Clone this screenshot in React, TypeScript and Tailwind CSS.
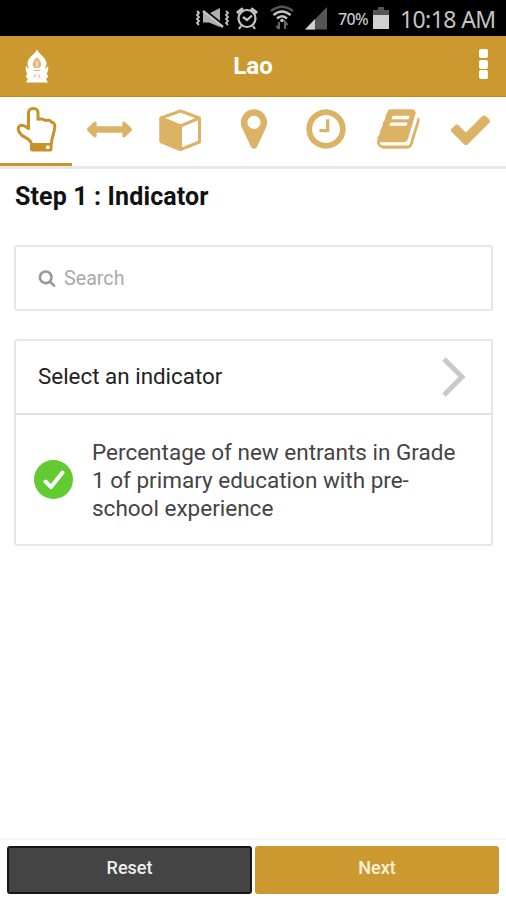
import { useState } from "react";

type IconProps = { className?: string };

function PointerIcon({ className }: IconProps) {
  return (
    <svg viewBox="0 0 46 46" className={className} fill="none">
      <path
        d="M18.500 38.500 C18.500 33 12 32 8.500 29 C4.500 25 4.500 21.500 6.500 20 C9 18.200 12.500 20 15.500 22.500 V6.500 C15.500 1.200 25 1.200 25 6.500 V13.200 C29 12.500 31.500 13.500 32.500 14.500 C35.500 13.800 38 14.800 38.700 16.300 C41.500 16.500 42 19 41.700 22 C41 28 38.500 32 38.300 38.500"
        stroke="currentColor"
        strokeWidth="3"
        strokeLinejoin="round"
      />
      <path d="M17 37 H39.500 V43 Q39.500 45.500 37 45.500 H19.500 Q17 45.500 17 43 Z" fill="currentColor" />
      <rect x="33" y="39.500" width="3.600" height="3.600" rx="1" fill="#fff" />
    </svg>
  );
}

function CubeIcon({ className }: IconProps) {
  return (
    <svg viewBox="0 0 46 46" className={className} fill="none" stroke="currentColor" strokeWidth="3" strokeLinejoin="round">
      <path d="M21.500 5 L40.500 12 V36 L21.500 43.500 L2 35.500 V12 Z" />
      <path d="M2 12 L21.500 20 V43.500 L2 35.500 Z" fill="currentColor" />
      <path d="M21.500 20 L40.500 12" />
    </svg>
  );
}

const glyphs = {
  arrows:
    "M1792 896q0 26-19 45l-256 256q-19 19-45 19t-45-19-19-45v-128h-1024v128q0 26-19 45t-45 19-45-19l-256-256q-19-19-19-45t19-45l256-256q19-19 45-19t45 19 19 45v128h1024v-128q0-26 19-45t45-19 45 19l256 256q19 19 19 45z",
  marker:
    "M1152 640q0-106-75-181t-181-75-181 75-75 181 75 181 181 75 181-75 75-181zm256 0q0 109-33 179l-364 774q-16 33-47.500 52t-67.500 19-67.500-19-46.500-52l-365-774q-33-70-33-179 0-212 150-362t362-150 362 150 150 362z",
  clock:
    "M1024 544v448q0 14-9 23t-23 9h-320q-14 0-23-9t-9-23v-64q0-14 9-23t23-9h224v-352q0-14 9-23t23-9h64q14 0 23 9t9 23zm416 352q0-148-73-273t-198-198-273-73-273 73-198 198-73 273 73 273 198 198 273 73 273-73 198-198 73-273zm224 0q0 209-103 385.500t-279.500 279.500-385.500 103-385.500-103-279.500-279.500-103-385.500 103-385.500 279.500-279.500 385.500-103 385.500 103 279.500 279.500 103 385.500z",
  book: "M1639 478q40 57 18 129l-275 906q-19 64-76.500 107.500t-122.500 43.500h-923q-77 0-148.500-53.500t-99.500-131.500q-24-67-2-127 0-4 3-27t4-37q1-8-3-21.500t-3-19.500q2-11 8-21t16.500-23.500 16.500-23.500q23-38 45-91.500t30-91.500q3-10 .5-30t-.5-28q3-11 17-28t17-23q21-36 42-92t25-90q1-9-2.500-32t.5-28q4-13 22-30.500t22-22.500q19-26 42.500-84.500t27.500-96.500q1-8-3-25.500t-2-26.500q2-8 9-18t18-23 17-21q8-12 16.500-30.500t15-35 16-36 19.500-32 26.500-23.500 36-11.500 47.500 5.500l-1 3q38-9 51-9h761q74 0 114 56t18 130l-274 906q-36 119-71.500 153.500t-128.500 34.500h-869q-27 0-38 15-11 16-1 43 24 70 144 70h923q29 0 56-15.500t35-41.500l300-987q7-22 5-57 38 15 59 43zm-1064 2q-4 13 2 22.500t20 9.500h608q13 0 25.500-9.500t16.500-22.500l21-64q4-13-2-22.500t-20-9.500h-608q-13 0-25.500 9.500t-16.500 22.500zm-83 256q-4 13 2 22.500t20 9.500h608q13 0 25.500-9.500t16.500-22.500l21-64q4-13-2-22.500t-20-9.500h-608q-13 0-25.500 9.500t-16.500 22.500z",
  check:
    "M1671 566q0 40-28 68l-724 724-136 136q-28 28-68 28t-68-28l-136-136-362-362q-28-28-28-68t28-68l136-136q28-28 68-28t68 28l294 295 656-657q28-28 68-28t68 28l136 136q28 28 28 68z",
  search:
    "M1216 832q0-185-131.500-316.500t-316.500-131.500-316.500 131.500-131.500 316.500 131.500 316.500 316.500 131.500 316.500-131.500 131.500-316.500zm512 832q0 52-38 90t-90 38q-54 0-90-38l-343-342q-179 124-399 124-143 0-273.500-55.500t-225-150-150-225-55.500-273.500 55.500-273.500 150-225 225-150 273.500-55.500 273.500 55.500 225 150 150 225 55.500 273.500q0 220-124 399l343 343q37 37 37 90z",
};

function Glyph({ name, className }: { name: keyof typeof glyphs; className?: string }) {
  return (
    <svg viewBox="0 0 1792 1792" className={className} fill="currentColor">
      <path d={glyphs[name]} />
    </svg>
  );
}

function StatusBar() {
  return (
    <div className="flex h-9 shrink-0 items-center bg-black pl-[195px] text-[#c4c4c4]">
      <svg viewBox="0 0 36 26" className="h-[26px] w-9 shrink-0" fill="none" stroke="currentColor" strokeWidth="1.800">
        <path d="M2 6 l2 2 -2 2 2 2 -2 2 2 2 -2 2 2 2" />
        <path d="M31 6 l2 2 -2 2 2 2 -2 2 2 2 -2 2 2 2" />
        <path d="M8 8 H15 L25 3 V22 L14 17.500 H8 Z" fill="#b0b0b0" stroke="none" />
        <path d="M9.500 6 L29.500 22" stroke="#000" strokeWidth="4" />
        <path d="M8 6 L28 22" strokeWidth="2.600" />
      </svg>
      <svg viewBox="0 0 24 26" className="ml-[4px] h-[26px] w-6 shrink-0" fill="none" stroke="currentColor" strokeWidth="2.200">
        <circle cx="12" cy="13.500" r="8.500" />
        <path d="M2 8 L8 3.500 M16 3.500 L22 8" strokeWidth="3.200" />
        <path d="M8 12 L12 15 L17 10.500 M6 21 L4 24 M18 21 L20 24" />
      </svg>
      <svg viewBox="0 0 24 26" className="ml-[11px] h-[26px] w-6 shrink-0" fill="none" stroke="currentColor" strokeWidth="2.400">
        <path d="M1 6 Q12 -2.500 23 6" stroke="#555" />
        <path d="M3.500 10 Q12 3 20.500 10" />
        <path d="M7 13.500 Q12 9 17 13.500" />
        <circle cx="12" cy="15.500" r="1.800" fill="currentColor" stroke="none" />
        <path d="M9 17 V24 M6.500 21 L9 24 M15 24 V17 L17.500 20" stroke="#666" strokeWidth="2" />
      </svg>
      <svg viewBox="0 0 24 26" className="ml-[10px] h-[26px] w-6 shrink-0">
        <path d="M1 24.500 L23 2 V24.500 Z" fill="#555" />
        <path d="M1 24.500 L11 14 V24.500 Z" fill="#d0d0d0" />
      </svg>
      <span className="ml-[10px] w-[32px] shrink-0 whitespace-nowrap pt-0.5 font-['Noto_Sans',sans-serif] text-base font-medium tracking-[-0.600px]">
        70%
      </span>
      <svg viewBox="0 0 16 24" className="ml-[3px] h-6 w-4 shrink-0">
        <path d="M5 1 H11 V4 H16 V10 H0 V4 H5 Z" fill="#555" />
        <rect y="9" width="16" height="14" fill="#d0d0d0" />
      </svg>
      <span className="ml-[11px] whitespace-nowrap pt-0.5 font-['Noto_Sans',sans-serif] text-[23px] tracking-[-0.600px]">
        10:18 AM
      </span>
    </div>
  );
}

function Header() {
  return (
    <header className="grid h-[61px] shrink-0 grid-cols-3 items-center border-b border-[#bd8a1c] bg-[#cc9930] pr-[18px] pl-[18px]">
      <svg viewBox="0 0 26 36" className="ml-1.5 h-9 w-[26px]" fill="#fff">
        <path d="M13 1 C14 6 22.500 9 22.500 15.500 C22.500 18 21.500 19 21 20 C22.500 21 22.500 19 24 18 C25 22 23.500 24 22.500 26 C25 27 24 30 22 31 L24 34.500 H2 L4 31 C2 30 1 27 3.500 26 C2.500 24 1 22 2 18 C3.500 19 3.500 21 5 20 C4.500 19 3.500 18 3.500 15.500 C3.500 9 12 6 13 1 Z" />
        <path d="M13 9 C15.500 12 18 14 17 18 L15.500 20 H10.500 L9 18 C8 14 10.500 12 13 9 Z" fill="#e3b878" />
        <path d="M13 13 V19" stroke="#fff" strokeWidth="1" />
        <path d="M9.500 22.500 H16.500 M10 29.500 L11.500 26.500 M16 29.500 L14.500 26.500" fill="none" stroke="#e3b878" strokeWidth="1.200" />
      </svg>
      <h1 className="text-center text-[24px] font-bold text-white">Lao</h1>
      <button className="flex flex-col gap-[1.500px] justify-self-end pb-1" aria-label="Menu">
        <span className="size-[9px] rounded-[2px] bg-white" />
        <span className="size-[9px] rounded-[2px] bg-white" />
        <span className="size-[9px] rounded-[2px] bg-white" />
      </button>
    </header>
  );
}

const steps = [
  { id: "indicator", icon: <PointerIcon className="size-[46px]" /> },
  { id: "range", icon: <Glyph name="arrows" className="size-[45px]" /> },
  { id: "dimension", icon: <CubeIcon className="size-[46px]" /> },
  { id: "area", icon: <Glyph name="marker" className="size-[46px]" /> },
  { id: "time", icon: <Glyph name="clock" className="size-[46px]" /> },
  { id: "source", icon: <Glyph name="book" className="ml-0.5 size-[46px]" /> },
  { id: "finish", icon: <Glyph name="check" className="size-[45px]" /> },
];

export default function App() {
  const [active, setActive] = useState("indicator");
  const [query, setQuery] = useState("");

  return (
    <div className="flex h-[900px] w-[506px] flex-col overflow-hidden bg-white font-[Roboto,sans-serif]">
      <StatusBar />
      <Header />

      <nav className="grid h-[72px] shrink-0 grid-cols-7 border-b-[3px] border-[#e8e8e8]">
        {steps.map((step) => (
          <button
            key={step.id}
            onClick={() => setActive(step.id)}
            className={`flex h-[69px] items-center justify-center border-b-[3px] pb-[2px] ${
              active === step.id ? "border-[#c8952b] text-[#c8922b]" : "border-transparent pl-[2px] text-[#dbb266]"
            }`}
          >
            {step.icon}
          </button>
        ))}
      </nav>

      <main className="flex-1 pr-[13px] pl-[14px]">
        <h2 className="mt-[13px] pl-px text-[25px] leading-[30px] font-bold tracking-[0.130px] text-[#111]">
          Step 1 : Indicator
        </h2>

        <div className="mt-[33px] flex h-[66px] items-center rounded-[3px] border-2 border-[#e6e6e6] pl-[22px]">
          <Glyph name="search" className="size-[18px] text-[#999]" />
          <input
            value={query}
            onChange={(e) => setQuery(e.target.value)}
            placeholder="Search"
            className="ml-[8px] flex-1 pt-0.5 text-[19.700px] outline-none placeholder:text-[#aaa]"
          />
        </div>

        <div className="mt-[28px] rounded-[3px] border-2 border-[#e6e6e6]">
          <button className="flex h-[74px] w-full items-center justify-between border-b-2 border-[#e0e0e0] pr-[25px] pl-[22px] text-[22.400px] text-[#222]">
            Select an indicator
            <svg viewBox="0 0 24 40" className="h-10 w-6" fill="none" stroke="#c9c9c9" strokeWidth="5">
              <path d="M2 2 L20 20 L2 38" />
            </svg>
          </button>
          <div className="flex h-[129px] items-center pl-[18px]">
            <div className="flex size-[39px] shrink-0 items-center justify-center rounded-full bg-[#62cb31]">
              <svg viewBox="0 0 22 22" className="size-[22px]" fill="none" stroke="#fff" strokeWidth="4">
                <path d="M2.500 12.500 L8 18 L19.500 3.500" strokeLinecap="round" strokeLinejoin="round" />
              </svg>
            </div>
            <p className="ml-[19px] w-[375px] text-[22.500px] leading-[28px] text-[#444]">
              Percentage of new entrants in Grade 1 of primary education with pre-school experience
            </p>
          </div>
        </div>
      </main>

      <footer className="flex h-[62px] shrink-0 gap-[3px] border-t-2 border-[#f6f6f6] pt-[6px] pr-[7px] pb-[6px] pl-[7px] text-[18px] font-medium">
        <button className="w-[245px] rounded-[3px] border-2 border-[#171717] bg-[#444] pb-1.5 text-[#eee]">Reset</button>
        <button className="flex-1 rounded-[3px] bg-[#cc9930] pb-1.5 text-[#fff3dc]">Next</button>
      </footer>
    </div>
  );
}
